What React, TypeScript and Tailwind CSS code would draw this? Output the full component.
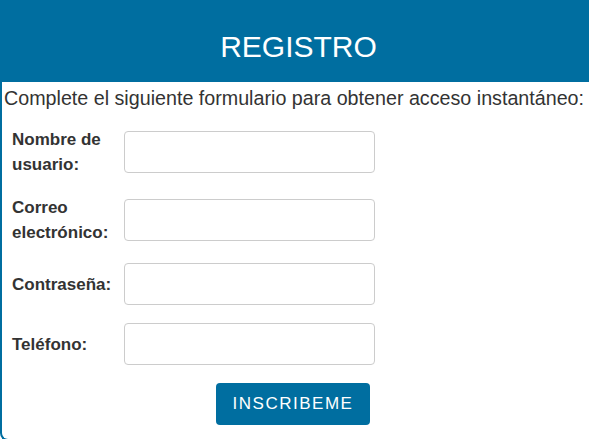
import React from 'react';

const fields: Array<{ id: string; label: string; type: string }> = [
  { id: 'usuario', label: 'Nombre de usuario:', type: 'text' },
  { id: 'correo', label: 'Correo electrónico:', type: 'email' },
  { id: 'clave', label: 'Contraseña:', type: 'password' },
  { id: 'telefono', label: 'Teléfono:', type: 'tel' },
];

const App: React.FC = () => {
  return (
    <div className="w-[589px] h-[439px] overflow-hidden bg-white font-['Liberation_Sans',Arial,sans-serif]">
      <div className="w-[597px] min-h-[441px] border-l-2 border-b-2 border-[#006ea0] rounded-bl-lg">
        {/* Header */}
        <div className="-ml-[2px] h-[82px] bg-[#006ea0] pt-[30px] text-center text-[30px] leading-[34px] text-white">
          REGISTRO
        </div>

        <p className="mt-[4px] pl-[2px] text-[19.7px] leading-[24px] whitespace-nowrap text-[#333]">
          Complete el siguiente formulario para obtener acceso instantáneo:
        </p>

        {/* Form */}
        <form className="mt-[17px] flex flex-col gap-[18px] pl-[10px]">
          {fields.map((f) => (
            <div key={f.id} className="flex items-center gap-[8px]">
              <label
                htmlFor={f.id}
                className="w-[104px] text-[17px] leading-[25px] font-bold text-[#333]"
              >
                {f.label}
              </label>
              <input
                id={f.id}
                type={f.type}
                className="h-[42px] w-[251px] rounded border border-[#ccc] bg-white px-3 outline-none"
              />
            </div>
          ))}

          <div className="flex">
            <button
              type="button"
              className="ml-[204px] h-[42px] w-[154px] rounded bg-[#006ea0] text-[17px] tracking-[1.5px] text-white"
            >
              INSCRIBEME
            </button>
          </div>
        </form>
      </div>
    </div>
  );
};

export default App;
